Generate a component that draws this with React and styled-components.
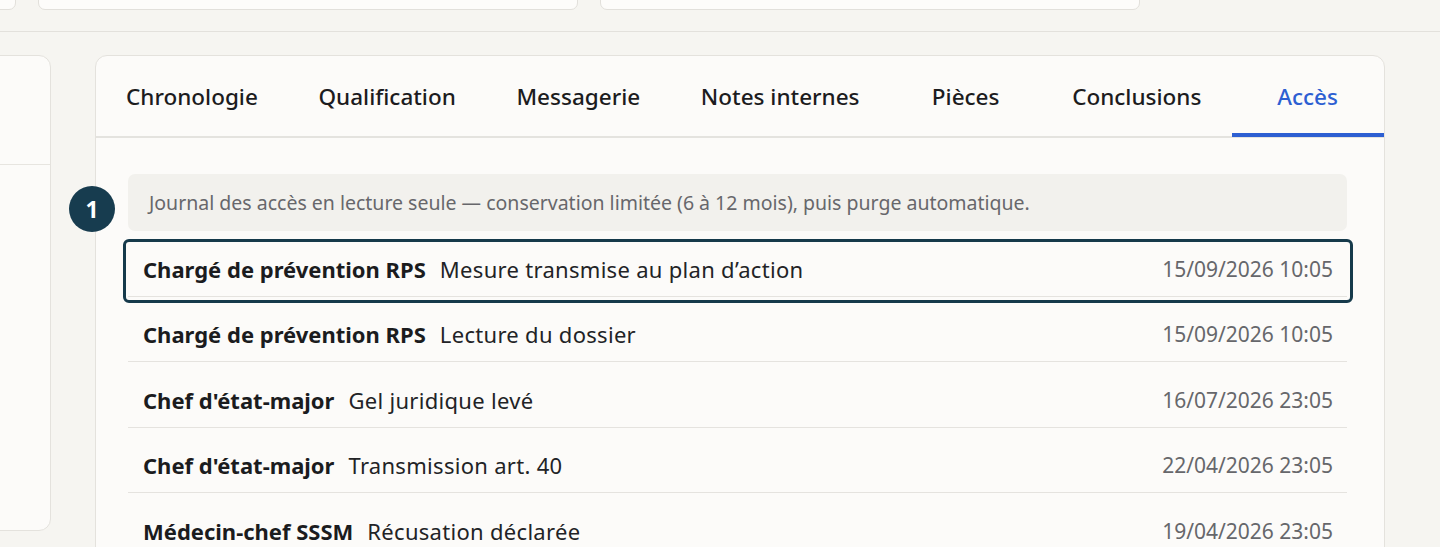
import React, { useState } from "react";
import styled, { createGlobalStyle } from "styled-components";

const tabs = [
  "Chronologie",
  "Qualification",
  "Messagerie",
  "Notes internes",
  "Pièces",
  "Conclusions",
  "Accès",
];

const entries = [
  { who: "Chargé de prévention RPS", what: "Mesure transmise au plan d’action", when: "15/09/2026 10:05", focused: true },
  { who: "Chargé de prévention RPS", what: "Lecture du dossier", when: "15/09/2026 10:05" },
  { who: "Chef d'état-major", what: "Gel juridique levé", when: "16/07/2026 23:05" },
  { who: "Chef d'état-major", what: "Transmission art. 40", when: "22/04/2026 23:05" },
  { who: "Médecin-chef SSSM", what: "Récusation déclarée", when: "19/04/2026 23:05" },
];

function App() {
  const [active, setActive] = useState("Accès");

  return (
    <>
      <GlobalStyle />
      <Page>
        <FilterBar>
          <FilterInput />
          <FilterInput />
          <FilterInput />
        </FilterBar>
        <Columns>
          <SideCard>
            <SideHead />
          </SideCard>
          <MainCard>
            <TabBar>
              {tabs.map((t) => (
                <Tab key={t} $active={t === active} onClick={() => setActive(t)}>
                  {t}
                </Tab>
              ))}
            </TabBar>
            <Body>
              <Step>1</Step>
              <Notice>
                Journal des accès en lecture seule — conservation limitée (6 à 12 mois), puis purge automatique.
              </Notice>
              <List>
                {entries.map((e, i) => (
                  <Row key={i} $focused={e.focused}>
                    <Who>{e.who}</Who>
                    <What>{e.what}</What>
                    <When>{e.when}</When>
                  </Row>
                ))}
              </List>
            </Body>
          </MainCard>
        </Columns>
      </Page>
    </>
  );
}

export default App;

// css
const GlobalStyle = createGlobalStyle`
  html, body {
    margin: 0;
    background: #f6f5f1;
    font-family: "Noto Sans", "Open Sans", sans-serif;
    color: #1d1d1f;
    overflow: hidden;
  }
  * { box-sizing: border-box; }
`;

const Page = styled.div`
  height: 547px;
  overflow: hidden;
`;

const FilterBar = styled.div`
  display: grid;
  grid-template-columns: 540px 540px 540px;
  column-gap: 22px;
  align-items: start;
  margin-left: -524px;
  height: 32px;
  border-bottom: 1.5px solid #e3e1dc;
`;

const FilterInput = styled.div`
  height: 44px;
  margin-top: -34px;
  background: #fdfcfa;
  border: 1.5px solid #e2e0db;
  border-radius: 7px;
`;

const Columns = styled.div`
  display: grid;
  grid-template-columns: 300px 1290px;
  column-gap: 44px;
  margin-left: -249px;
  padding-top: 23px;
`;

const SideCard = styled.div`
  height: 476px;
  background: #fcfbf9;
  border: 1.5px solid #e4e2dd;
  border-radius: 12px;
`;

const SideHead = styled.div`
  height: 109px;
  border-bottom: 1.5px solid #e7e5e0;
`;

const MainCard = styled.div`
  background: #fcfbf9;
  border: 1.5px solid #e4e2dd;
  border-radius: 12px;
  height: 560px;
`;

const TabBar = styled.div`
  display: flex;
  height: 82px;
  border-bottom: 2px solid #e4e3df;
`;

const Tab = styled.button`
  min-width: 152px;
  padding: 0 31px 0 30px;
  border: none;
  background: none;
  font-family: inherit;
  font-size: 22.5px;
  font-weight: 500;
  color: ${(p) => (p.$active ? "#2d5fd2" : "#1c1c1e")};
  box-shadow: ${(p) => (p.$active ? "inset 0 -4px 0 #2d5fd2" : "none")};
  margin-bottom: -1px;
  cursor: pointer;
  white-space: nowrap;
`;

const Body = styled.div`
  position: relative;
  padding: 36px 37px 0 32px;
`;

const Step = styled.div`
  position: absolute;
  left: -27px;
  top: 48px;
  width: 46px;
  height: 46px;
  border-radius: 50%;
  background: #173c4f;
  color: #fff;
  font-size: 23px;
  font-weight: 700;
  display: flex;
  align-items: center;
  justify-content: center;
`;

const Notice = styled.div`
  height: 57px;
  display: flex;
  align-items: center;
  padding: 0 21px;
  background: #f2f1ed;
  border-radius: 7px;
  font-size: 19.5px;
  color: #67676b;
`;

const List = styled.div`
  display: flex;
  flex-direction: column;
`;

const Row = styled.div`
  position: relative;
  height: 65.5px;
  display: flex;
  align-items: center;
  padding: 11px 14px 0 15px;
  border-bottom: 1.5px solid #e5e3df;
  &::after {
    content: "";
    display: ${(p) => (p.$focused ? "block" : "none")};
    position: absolute;
    top: 8px;
    bottom: -7px;
    left: -5px;
    right: -6px;
    border: 3px solid #163a4b;
    border-radius: 6px;
  }
`;

const Who = styled.span`
  font-size: 22px;
  font-weight: 700;
  color: #1b1c1e;
  margin-right: 14px;
`;

const What = styled.span`
  font-size: 22px;
  letter-spacing: 0.3px;
  color: #222326;
  flex: 1;
`;

const When = styled.span`
  font-size: 21px;
  color: #66676b;
`;
